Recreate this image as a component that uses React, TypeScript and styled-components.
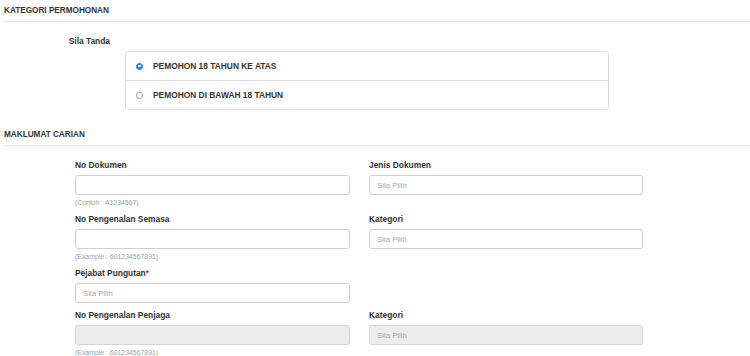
import React from "react";
import styled, { createGlobalStyle } from "styled-components";

const GlobalStyle = createGlobalStyle`
  html, body {
    margin: 0;
    padding: 0;
    background: #ffffff;
    font-family: "Liberation Sans", Arial, Helvetica, sans-serif;
    color: #333333;
  }
  * { box-sizing: border-box; }
`;

const Page = styled.div`
  padding-top: 5px;
  width: 750px;
`;

const SectionHeader = styled.div<{ $gap?: number }>`
  margin: ${(p) => p.$gap ?? 0}px 0 0 4px;
  font-size: 8.2px;
  font-weight: 700;
  line-height: 11px;
  padding-bottom: 5px;
  border-bottom: 1px solid #e4e4e4;
  color: #333333;
`;

const ChoiceRow = styled.div`
  display: flex;
  gap: 15px;
  margin-top: 14px;
  padding-left: 4px;
`;

const ChoiceLabel = styled.div`
  width: 106px;
  text-align: right;
  font-size: 8.4px;
  font-weight: 700;
  line-height: 11px;
  color: #333333;
`;

const ChoiceBox = styled.div`
  margin-top: 15px;
  width: 484px;
  border: 1px solid #dedede;
  border-radius: 3px;
`;

const ChoiceItem = styled.label`
  display: flex;
  align-items: center;
  gap: 10px;
  height: 28px;
  padding-left: 10px;
  font-size: 8.4px;
  font-weight: 700;
  color: #333333;
  & + & {
    border-top: 1px solid #dedede;
    height: 29px;
  }
`;

const RadioDot = styled.span<{ $checked?: boolean }>`
  display: inline-flex;
  align-items: center;
  justify-content: center;
  width: 7px;
  height: 7px;
  border-radius: 50%;
  background: ${(p) => (p.$checked ? "#2f86f6" : "#ffffff")};
  border: 1px solid ${(p) => (p.$checked ? "#2a7ae8" : "#9a9a9a")};
  &::after {
    content: "";
    display: ${(p) => (p.$checked ? "block" : "none")};
    width: 2.5px;
    height: 2.5px;
    border-radius: 50%;
    background: #ffffff;
  }
`;

const FieldGrid = styled.div`
  display: grid;
  grid-template-columns: 275px 274px;
  column-gap: 19px;
  row-gap: 7px;
  margin: 14px 0 0 75px;
`;

const Field = styled.div`
  display: flex;
  flex-direction: column;
`;

const FieldLabel = styled.div`
  font-size: 8.4px;
  font-weight: 700;
  line-height: 11px;
  margin-bottom: 4px;
  color: #333333;
`;

const Required = styled.span`
  color: #e0242b;
`;

const TextInput = styled.input`
  height: 20px;
  width: 100%;
  border: 1px solid #cfcfcf;
  border-radius: 3px;
  padding: 0 7px;
  font-family: "Liberation Sans", Arial, sans-serif;
  font-size: 7.8px;
  color: #555555;
  background: #ffffff;
  outline: none;
  &:disabled {
    background: #ececec;
    border-color: #d4d4d4;
  }
  &::placeholder {
    color: #a6a6a6;
  }
`;

const Hint = styled.div`
  margin-top: 3px;
  font-size: 6.9px;
  line-height: 9px;
  color: #a0a0a0;
`;

type FieldProps = {
  label: string;
  required?: boolean;
  placeholder?: string;
  hint?: string;
  disabled?: boolean;
};

const FormField = ({ label, required, placeholder, hint, disabled }: FieldProps) => (
  <Field>
    <FieldLabel>
      {label}
      {required && <Required>*</Required>}
    </FieldLabel>
    <TextInput placeholder={placeholder} disabled={disabled} readOnly />
    {hint && <Hint>{hint}</Hint>}
  </Field>
);

export default function App() {
  return (
    <Page>
      <GlobalStyle />
      <SectionHeader>KATEGORI PERMOHONAN</SectionHeader>
      <ChoiceRow>
        <ChoiceLabel>Sila Tanda</ChoiceLabel>
        <ChoiceBox>
          <ChoiceItem>
            <RadioDot $checked />
            PEMOHON 18 TAHUN KE ATAS
          </ChoiceItem>
          <ChoiceItem>
            <RadioDot />
            PEMOHON DI BAWAH 18 TAHUN
          </ChoiceItem>
        </ChoiceBox>
      </ChoiceRow>

      <SectionHeader $gap={19}>MAKLUMAT CARIAN</SectionHeader>
      <FieldGrid>
        <FormField label="No Dokumen" hint="(Contoh : A1234567)" />
        <FormField label="Jenis Dokumen" placeholder="Sila Pilih" />
        <FormField label="No Pengenalan Semasa" hint="(Example : 601234567891)" />
        <FormField label="Kategori" placeholder="Sila Pilih" />
        <FormField label="Pejabat Pungutan" required placeholder="Sila Pilih" />
        <div />
        <FormField label="No Pengenalan Penjaga" hint="(Example : 601234567891)" disabled />
        <FormField label="Kategori" placeholder="Sila Pilih" disabled />
      </FieldGrid>
    </Page>
  );
}
